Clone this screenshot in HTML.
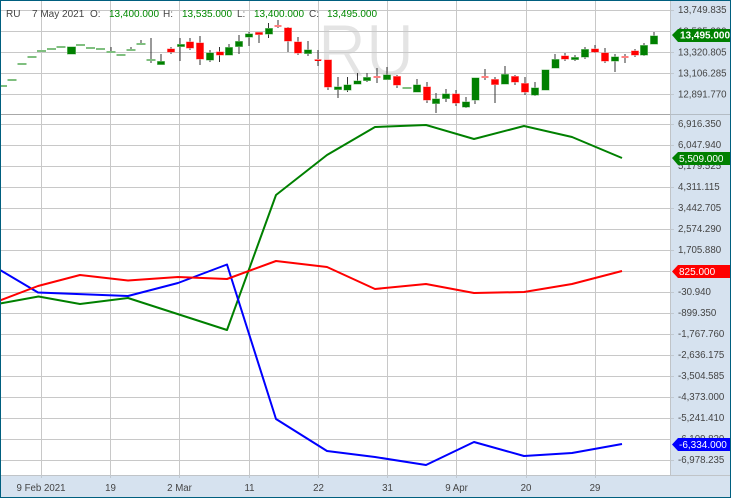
<!DOCTYPE html>
<html><head><meta charset="utf-8"><style>
html,body{margin:0;padding:0;background:#fff}
svg{display:block}
text{font-family:"Liberation Sans",sans-serif;font-size:10px}
.a text{fill:#444;font-size:9.7px}
.h text{fill:#444}
.h .g{fill:#080}
.w text{fill:#fff}
</style></head><body>
<svg width="731" height="498" viewBox="0 0 731 498" xmlns="http://www.w3.org/2000/svg">
<rect width="731" height="498" fill="#fff"/>
<rect x="670" y="0" width="61" height="498" fill="#d6e2ef"/>
<rect x="0" y="475" width="731" height="23" fill="#d6e2ef"/>
<text x="318" y="76" textLength="96" lengthAdjust="spacingAndGlyphs" style="font-size:74px;fill:#e4e4e4;stroke:#fff;stroke-width:1px">RU</text>
<path d="M0 10.5H670M0 31.5H670M0 52.5H670M0 73.5H670M0 94.5H670M0 124.5H670M0 145.5H670M0 166.5H670M0 187.5H670M0 208.5H670M0 229.5H670M0 250.5H670M0 271.5H670M0 292.5H670M0 313.5H670M0 334.5H670M0 355.5H670M0 376.5H670M0 397.5H670M0 418.5H670M0 439.5H670M0 460.5H670M41.5 0V475M110.5 0V475M179.5 0V475M249.5 0V475M318.5 0V475M387.5 0V475M456.5 0V475M526.5 0V475M595.5 0V475" stroke="#c8c8c8" stroke-width="1" fill="none"/>
<path d="M0 114.5H670" stroke="#a8a8a8" stroke-width="1"/>
<path d="M0 475.5H731M670.5 0V475" stroke="#c0c4c8" stroke-width="1"/>
<path d="M670 114.5H731" stroke="#b4bcc4" stroke-width="1"/>
<path d="M671 10.5h3M671 52.5h3M671 73.5h3M671 94.5h3M671 124.5h3M671 145.5h3M671 187.5h3M671 208.5h3M671 229.5h3M671 250.5h3M671 292.5h3M671 313.5h3M671 334.5h3M671 355.5h3M671 376.5h3M671 397.5h3M671 418.5h3M671 460.5h3M41.5 475v3M110.5 475v3M179.5 475v3M249.5 475v3M318.5 475v3M387.5 475v3M456.5 475v3M526.5 475v3M595.5 475v3" stroke="#c0c8d0" stroke-width="1"/>
<!-- wicks -->
<path d="M111 47V53M141 40V45M131 47V51M151 38V63M161 54V62M171 47V54M180 38V61M190 38V50M200 36V65M210 50V62M219.500 47V62M229 44V55M239 35V54M249 32V46M259 32V43M268.500 23V38M278 20V28M288 27V52M298 37V55M308 41V56M318 50V66M328 86V90M338 77V98M347.500 77V92M357.500 73V84M367 73V82M377 68V83M387 67V80M397 75V88M417 79V92M427 82V103M436 93V113M446 89V102M456 90V106M466 97V108M475 78V104M485 69V80M495 77V103M505 66V84M515 75V85M525 77V95M535 82V96M555 54V60M565 53V61M575 55V61M585 47V59M595 45V53M605 48V63M615 54V72M625 54V63M635 49V57M644 43V56M654 32V44" stroke="#333" stroke-width="1" fill="none"/>
<!-- translucent green dashes -->
<path d="M-1 86H7M7.500 80H16.500M17.500 64H26.500M27.500 57H36.500M37 51H46M47 49H56M56.500 47H65.500M76 45H85M86 48H95M96 49H105M106.500 52H115.500M116.500 55H125.500M126.500 50H135.500M136.500 44H145.500M146.500 60H155.500M402.500 88H411.500" stroke="#7fbf7f" stroke-width="2" fill="none"/>
<!-- green bodies -->
<path d="M68 47.500h7v6h-7zM158 62h6v2h-6zM178 45h6v1h-6zM207 53.500h6v6h-6zM226 48h6v6.500h-6zM236 42h6v4h-6zM246 34.500h6v2h-6zM266 29h6v4.500h-6zM305 50.500h6v2.500h-6zM335 87.500h6v1.500h-6zM344.500 85.500h6v4h-6zM354.500 81.500h6v2h-6zM364 78h6v2h-6zM384 75.500h6v3.500h-6zM414 85.500h6v6h-6zM433 99.500h6v3.500h-6zM443 94.500h6v3.500h-6zM463 102.500h6v4h-6zM472.500 78.500h6v21h-6zM502 75h6v8.500h-6zM532 88.500h6v6h-6zM542.500 70.500h6v19h-6zM552.500 60h6v7.500h-6zM572 58h6v1h-6zM582 50h6v6.500h-6zM612 57.500h6v3h-6zM641 46h6v8.500h-6zM651 36.500h6v7h-6z" fill="#008000" stroke="#8fc78f" stroke-width="2"/>
<path d="M68 47.500h7v6h-7zM158 62h6v2h-6zM178 45h6v1h-6zM207 53.500h6v6h-6zM226 48h6v6.500h-6zM236 42h6v4h-6zM246 34.500h6v2h-6zM266 29h6v4.500h-6zM305 50.500h6v2.500h-6zM335 87.500h6v1.500h-6zM344.500 85.500h6v4h-6zM354.500 81.500h6v2h-6zM364 78h6v2h-6zM384 75.500h6v3.500h-6zM414 85.500h6v6h-6zM433 99.500h6v3.500h-6zM443 94.500h6v3.500h-6zM463 102.500h6v4h-6zM472.500 78.500h6v21h-6zM502 75h6v8.500h-6zM532 88.500h6v6h-6zM542.500 70.500h6v19h-6zM552.500 60h6v7.500h-6zM572 58h6v1h-6zM582 50h6v6.500h-6zM612 57.500h6v3h-6zM641 46h6v8.500h-6zM651 36.500h6v7h-6z" fill="#008000" stroke="#008000" stroke-width="1"/>
<!-- red bodies -->
<path d="M168 49.500h6v2h-6zM187 42.500h6v5h-6zM197 43.500h6v15h-6zM217 52.500h6v2h-6zM256 33h6v1h-6zM285 28.500h6v12h-6zM295 42.500h6v10h-6zM325 60.500h6v26h-6zM394 77h6v7.500h-6zM424 87.500h6v12h-6zM453 94.500h6v8h-6zM492 80h6v4h-6zM512 77h6v4.500h-6zM522 84h6v7.500h-6zM562 56.500h6v2h-6zM592 49.500h6v2h-6zM602 53.500h6v7h-6zM632 51.500h6v3h-6z" fill="#f00" stroke="#ff9c9c" stroke-width="2"/>
<path d="M168 49.500h6v2h-6zM187 42.500h6v5h-6zM197 43.500h6v15h-6zM217 52.500h6v2h-6zM256 33h6v1h-6zM285 28.500h6v12h-6zM295 42.500h6v10h-6zM325 60.500h6v26h-6zM394 77h6v7.500h-6zM424 87.500h6v12h-6zM453 94.500h6v8h-6zM492 80h6v4h-6zM512 77h6v4.500h-6zM522 84h6v7.500h-6zM562 56.500h6v2h-6zM592 49.500h6v2h-6zM602 53.500h6v7h-6zM632 51.500h6v3h-6z" fill="#f00" stroke="#f00" stroke-width="1"/>
<path d="M274.500 26H281.500M314.500 60H321.500M373.500 77H380.500M481.500 77H488.500M621.500 57H628.500" stroke="#ff8080" stroke-width="2" fill="none"/>
<path d="M315 60.500H321" stroke="#f00" stroke-width="1" fill="none"/>
<!-- lines -->
<g fill="none" stroke-width="2" stroke-linejoin="round">
<polyline stroke="#008000" points="0,303.500 38.500,296.500 80,304 128,298 227,330 276,195 327,155 375,127 426,125 474,139 524,126 572,137 622,158"/>
<polyline stroke="#0000ff" points="0,270 38,292.500 128,296 178,283 227,264.500 276,419 327,451 375,457 426,465 474,442 524,456 572,453 622,444"/>
<polyline stroke="#ff0000" points="0,300.500 38,286 80,275 128,280.500 178,277 227,279 276,261 327,267 375,289 426,284 474,293 524,292 572,284 622,271"/>
</g>
<!-- axis -->
<g class="a">
<text x="678" y="13">13,749.835</text>
<text x="678" y="34.500">13,535.290</text>
<text x="678" y="55.500">13,320.805</text>
<text x="678" y="76.500">13,106.285</text>
<text x="678" y="97.500">12,891.770</text>
<text x="678" y="127">6,916.350</text>
<text x="678" y="148">6,047.940</text>
<text x="678" y="169">5,179.525</text>
<text x="678" y="190">4,311.115</text>
<text x="678" y="211">3,442.705</text>
<text x="678" y="232">2,574.290</text>
<text x="678" y="253">1,705.880</text>
<text x="678" y="295">-30.940</text>
<text x="678" y="316">-899.350</text>
<text x="678" y="337">-1,767.760</text>
<text x="678" y="358">-2,636.175</text>
<text x="678" y="379">-3,504.585</text>
<text x="678" y="400">-4,373.000</text>
<text x="678" y="421">-5,241.410</text>
<text x="678" y="442">-6,109.820</text>
<text x="678" y="463">-6,978.235</text>
<g text-anchor="middle">
<text x="41" y="491">9 Feb 2021</text>
<text x="110.500" y="491">19</text>
<text x="179.500" y="491">2 Mar</text>
<text x="249.500" y="491">11</text>
<text x="318.500" y="491">22</text>
<text x="387.500" y="491">31</text>
<text x="456.500" y="491">9 Apr</text>
<text x="526" y="491">20</text>
<text x="595" y="491">29</text>
</g>
</g>
<!-- tags -->
<path d="M672 35L678 29H731V42H678Z" fill="#008000"/>
<path d="M672 158L678 152H731V165H678Z" fill="#008000"/>
<path d="M672 271.500L678 265H731V278H678Z" fill="#f00"/>
<path d="M672 444.500L678 438H731V451H678Z" fill="#00f"/>
<g class="w">
<text x="680" y="38.500" style="font-weight:bold" textLength="50">13,495.000</text>
<text x="679" y="162">5,509.000</text>
<text x="679" y="275">825.000</text>
<text x="679" y="448">-6,334.000</text>
</g>
<!-- header -->
<g class="h">
<text x="6" y="17">RU</text>
<text x="32" y="17">7 May 2021</text>
<text x="90" y="17">O:</text>
<text class="g" x="109" y="17">13,400.000</text>
<text x="163" y="17">H:</text>
<text class="g" x="182" y="17">13,535.000</text>
<text x="237" y="17">L:</text>
<text class="g" x="254" y="17">13,400.000</text>
<text x="309" y="17">C:</text>
<text class="g" x="327" y="17">13,495.000</text>
</g>
<!-- border -->
<rect x="0.500" y="0.500" width="730" height="497" fill="none" stroke="#005f7f" stroke-width="1"/>
</svg>
</body></html>
